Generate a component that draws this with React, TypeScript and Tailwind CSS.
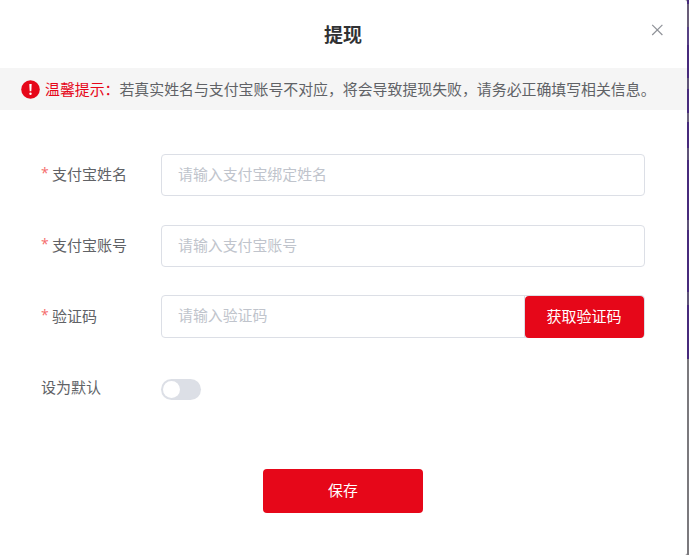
import { useState } from "react";

type Field = {
  key: string;
  label: string;
  placeholder: string;
};

const accountFields: Field[] = [
  { key: "name", label: "支付宝姓名", placeholder: "请输入支付宝绑定姓名" },
  { key: "account", label: "支付宝账号", placeholder: "请输入支付宝账号" }
];

function Label({ text, required }: { text: string; required?: boolean }) {
  return (
    <span className="flex w-[120px] shrink-0 items-center pb-[2px] text-[15px] text-[#606266]">
      {required && (
        <span className="mr-1 w-[7px] pb-[2px] font-['Open_Sans','Noto_Sans',sans-serif] text-[14px] text-[#f56c6c]">
          *
        </span>
      )}
      {text}
    </span>
  );
}

export default function App() {
  const [values, setValues] = useState<Record<string, string>>({});
  const [isDefault, setIsDefault] = useState(false);

  const update = (key: string, value: string) => {
    setValues((prev) => ({ ...prev, [key]: value }));
  };

  return (
    <div className="flex h-[555px] w-[689px] overflow-hidden bg-[#7b797d] font-['Noto_Sans_CJK_SC',sans-serif] text-[14.9px] leading-[20px]">
      <div className="flex h-full w-[687px] shrink-0 flex-col rounded-r-[2px] bg-white">
        <header className="flex h-[68px] shrink-0 justify-between">
          <span className="w-[35px]" />
          <h1 className="pt-[20px] text-[19px] leading-[28px] font-bold text-[#303133]">提现</h1>
          <button className="mt-[24px] mr-[24px] h-[12px] w-[12px]" aria-label="关闭">
            <svg viewBox="0 0 12 12" className="h-3 w-3" fill="none" stroke="#909399" strokeWidth="1.2">
              <path d="M1.2.8 11.4 11M11.4.8 1.2 11" />
            </svg>
          </button>
        </header>

        <div className="flex h-[42px] shrink-0 items-center bg-[#f5f5f5] pl-[21px] whitespace-nowrap text-[#606266]">
          <svg viewBox="0 0 19 19" className="mr-[5px] h-[19px] w-[19px] shrink-0">
            <circle cx="9.5" cy="9.5" r="9.3" fill="#e60719" />
            <path d="M8.3 4h2.4l-.4 7.2H8.7z" fill="#fff" />
            <circle cx="9.5" cy="13.7" r="1.2" fill="#fff" />
          </svg>
          <span className="text-[#e60719]">温馨提示：</span>
          <span>若真实姓名与支付宝账号不对应，将会导致提现失败，请务必正确填写相关信息。</span>
        </div>

        <form className="flex flex-col pt-[44px] pr-[42px] pl-[41px]">
          {accountFields.map((field) => (
            <label key={field.key} className="mb-[29px] flex h-[42px] items-center">
              <Label text={field.label} required />
              <input
                className="h-[42px] w-[484px] rounded-[4px] border border-[#dcdfe6] px-[16px] pb-[3px] text-[#606266] outline-none placeholder:text-[#c0c4cc]"
                placeholder={field.placeholder}
                value={values[field.key] ?? ""}
                onChange={(event) => update(field.key, event.target.value)}
              />
            </label>
          ))}

          <div className="-mt-px flex h-[43px] items-center">
            <Label text="验证码" required />
            <div className="flex h-[43px] w-[484px] rounded-[4px] border border-[#dcdfe6]">
              <input
                className="w-[363px] border-r border-[#dcdfe6] px-[16px] pb-[4px] text-[#606266] outline-none placeholder:text-[#c0c4cc]"
                placeholder="请输入验证码"
                value={values.code ?? ""}
                onChange={(event) => update("code", event.target.value)}
              />
              <button type="button" className="h-[42px] flex-1 rounded-[4px] bg-[#e60719] pr-px pb-[2px] text-[15px] text-white">
                获取验证码
              </button>
            </div>
          </div>

          <div className="mt-[39px] flex h-[22px] items-center">
            <Label text="设为默认" />
            <button
              type="button"
              role="switch"
              aria-checked={isDefault}
              aria-label="设为默认"
              onClick={() => setIsDefault(!isDefault)}
              className={`mt-[2px] flex h-[21px] w-[40px] items-center rounded-full px-[2px] ${
                isDefault ? "justify-end bg-[#e60719]" : "bg-[#dcdfe6]"
              }`}
            >
              <span className="h-[17px] w-[17px] rounded-full bg-white" />
            </button>
          </div>

          <button
            type="button"
            className="mt-[70px] ml-[222px] h-[44px] w-[160px] rounded-[4px] bg-[#e60719] pb-[2px] text-white"
          >
            保存
          </button>
        </form>
      </div>

      {/* dimmed page behind the dialog */}
      <div className="flex w-[2px] flex-col">
        <div className="h-[4px] bg-[#472a7c]" />
        <div className="h-[23px] bg-[#695d78]" />
        <div className="h-[18px] bg-[#574184]" />
        <div className="h-[33px] bg-[#472a7c]" />
        <div className="h-[11px] bg-[#5f5478]" />
        <div className="h-[24px] bg-[#472a7c]" />
        <div className="h-[9px] bg-[#6b617d]" />
        <div className="h-[26px] bg-[#472a7c]" />
        <div className="h-[12px] bg-[#5f5478]" />
        <div className="h-[60px] bg-[#472a7c]" />
        <div className="h-[10px] bg-[#5f5478]" />
        <div className="h-[62px] bg-[#472a7c]" />
        <div className="h-[13px] bg-[#5f5478]" />
        <div className="h-[54px] bg-[#472a7c]" />
      </div>
    </div>
  );
}
